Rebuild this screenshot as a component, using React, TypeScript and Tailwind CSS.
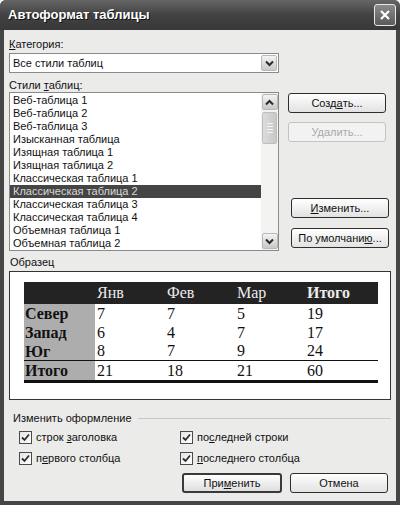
import type { ReactNode } from "react";

const ui = { fontFamily: '"Liberation Sans", Arial, sans-serif' };
const serif = { fontFamily: '"Liberation Serif", "Times New Roman", serif' };

const styles = [
  "Веб-таблица 1",
  "Веб-таблица 2",
  "Веб-таблица 3",
  "Изысканная таблица",
  "Изящная таблица 1",
  "Изящная таблица 2",
  "Классическая таблица 1",
  "Классическая таблица 2",
  "Классическая таблица 3",
  "Классическая таблица 4",
  "Объемная таблица 1",
  "Объемная таблица 2",
];

const rows = [
  { name: "Север", v: ["7", "7", "5", "19"] },
  { name: "Запад", v: ["6", "4", "7", "17"] },
  { name: "Юг", v: ["8", "7", "9", "24"] },
];

function Chevron({ up = false }: { up?: boolean }) {
  return (
    <svg width="9" height="7" viewBox="0 0 9 7">
      <path
        d={up ? "M1 5.5 L4.5 2 L8 5.5" : "M1 1.5 L4.5 5 L8 1.5"}
        fill="none"
        stroke="#2a2a2a"
        strokeWidth="2"
      />
    </svg>
  );
}

function ArrowBox({ up = false }: { up?: boolean }) {
  return (
    <div className="w-[16px] h-[16px] rounded-[2px] border border-[#b8b8b8] bg-gradient-to-b from-[#f4f4f4] to-[#c8c8c8] flex items-center justify-center">
      <Chevron up={up} />
    </div>
  );
}

function Btn({
  children,
  disabled = false,
  def = false,
  className = "",
}: {
  children: ReactNode;
  disabled?: boolean;
  def?: boolean;
  className?: string;
}) {
  return (
    <div
      className={`h-[20px] w-[98px] rounded-[3px] flex items-center justify-center text-[11px] ${
        disabled
          ? "border border-[#c4c4c4] text-[#a8a8a8] bg-[#f2f2f2]"
          : def
          ? "border-2 border-[#3a3a3a] text-[#111] bg-gradient-to-b from-white to-[#dedede]"
          : "border border-[#2e2e2e] text-[#111] bg-gradient-to-b from-white to-[#e2e2e2]"
      } ${className}`}
    >
      {children}
    </div>
  );
}

function Check({ children }: { children: ReactNode }) {
  return (
    <div className="flex items-center gap-[4px] h-[14px]">
      <div className="w-[13px] h-[13px] border border-[#4a4a4a] bg-gradient-to-br from-[#e4e4e4] to-white flex items-center justify-center">
        <svg width="9" height="9" viewBox="0 0 9 9">
          <path d="M1 4.5 L3.5 7 L8 1.5" fill="none" stroke="#2c2c2c" strokeWidth="1.8" />
        </svg>
      </div>
      <span className="text-[11px] text-[#111]">{children}</span>
    </div>
  );
}

export default function App() {
  return (
    <div className="w-[400px] h-[505px] bg-[#464646] flex flex-col rounded-t-[6px]" style={ui}>
      {/* title bar */}
      <div className="h-[30px] shrink-0 flex items-center justify-between pl-[8px] pr-[4px] rounded-t-[6px] bg-gradient-to-b from-[#666] via-[#424242] to-[#383838]">
        <span className="text-white font-bold text-[13px] [text-shadow:1px_1px_0_#111]">
          Автоформат таблицы
        </span>
        <div className="w-[22px] h-[22px] rounded-[3px] border border-[#e8e8e8] bg-gradient-to-b from-[#8a8a8a] to-[#5a5a5a] flex items-center justify-center">
          <svg width="12" height="12" viewBox="0 0 12 12">
            <path d="M2 2 L10 10 M10 2 L2 10" stroke="white" strokeWidth="2.2" />
          </svg>
        </div>
      </div>

      {/* body */}
      <div className="flex-1 mx-[4px] mb-[4px] bg-[#ebebea] px-[5px] pt-[8px] text-[11px] text-[#111]">
        <div className="h-[13px] leading-[13px]">
          <span className="underline">К</span>атегория:
        </div>
        <div className="mt-[2px] w-[270px] h-[20px] bg-white border border-[#8a8a8a] flex items-center justify-between pl-[3px] pr-[1px]">
          <span>Все стили таблиц</span>
          <ArrowBox />
        </div>
        <div className="mt-[6px] h-[13px] leading-[13px]">
          Стили <span className="underline">т</span>аблиц:
        </div>

        <div className="flex">
          <div className="w-[270px] h-[159px] bg-white border border-[#8a8a8a] flex">
            <div className="flex-1 pt-[1px]">
              {styles.map((s, i) => (
                <div
                  key={s}
                  className={`h-[13px] leading-[13px] pl-[3px] ${
                    i === 7 ? "bg-[#454545] text-[#d8d8d8]" : ""
                  }`}
                >
                  {s}
                </div>
              ))}
            </div>
            <div className="w-[17px] bg-[#f3f3f1] flex flex-col items-center justify-between py-[1px]">
              <div className="flex flex-col items-center">
                <ArrowBox up />
                <div className="mt-[2px] w-[15px] h-[32px] rounded-[2px] border border-[#bdbdbd] bg-gradient-to-r from-[#dcdcdc] to-[#c8c8c8] flex flex-col items-center justify-center gap-[2px]">
                  <div className="w-[6px] h-px bg-[#f4f4f4]" />
                  <div className="w-[6px] h-px bg-[#f4f4f4]" />
                  <div className="w-[6px] h-px bg-[#f4f4f4]" />
                  <div className="w-[6px] h-px bg-[#f4f4f4]" />
                </div>
              </div>
              <ArrowBox />
            </div>
          </div>
          <div className="ml-[9px] flex flex-col">
            <Btn className="mt-[1px]">
              Созд<span className="underline">а</span>ть...
            </Btn>
            <Btn disabled className="mt-[9px]">
              Удалить...
            </Btn>
            <Btn className="mt-[56px] ml-[3px]">
              <span className="underline">И</span>зменить...
            </Btn>
            <Btn className="mt-[10px] ml-[3px]">
              По умолчани<span className="underline">ю</span>...
            </Btn>
          </div>
        </div>

        <div className="mt-[5px] h-[13px] leading-[13px] pl-[1px]">Образец</div>
        <div className="mt-[2px] w-[382px] h-[129px] bg-white border border-[#333] pt-[10px] pl-[14px]">
          <div className="w-[354px]" style={serif}>
            <div className="h-[22px] bg-[#232323] text-[#ececec] text-[16px] flex items-center">
              <div className="w-[71px]" />
              <div className="w-[70px] pl-[2px]">Янв</div>
              <div className="w-[70px] pl-[2px]">Фев</div>
              <div className="w-[70px] pl-[2px]">Мар</div>
              <div className="flex-1 pl-[2px] font-bold">Итого</div>
            </div>
            {rows.map((r, i) => (
              <div
                key={r.name}
                className={`h-[19px] flex items-center text-[16px] text-[#111] ${
                  i === 2 ? "border-b border-[#111]" : ""
                }`}
              >
                <div className="w-[71px] h-full bg-[#adadad] font-bold pl-[1px] leading-[19px]">{r.name}</div>
                {r.v.map((v, j) => (
                  <div key={j} className={`${j === 3 ? "flex-1" : "w-[70px]"} pl-[2px]`}>
                    {v}
                  </div>
                ))}
              </div>
            ))}
            <div className="h-[22px] flex items-center text-[16px] text-[#111] border-b-[3px] border-[#111]">
              <div className="w-[71px] h-full bg-[#adadad] font-bold pl-[1px] leading-[19px]">Итого</div>
              {["21", "18", "21", "60"].map((v, j) => (
                <div key={j} className={`${j === 3 ? "flex-1" : "w-[70px]"} pl-[2px]`}>
                  {v}
                </div>
              ))}
            </div>
          </div>
        </div>

        <div className="mt-[12px] h-[13px] flex items-center pl-[4px]">
          <span className="leading-[13px]">Изменить оформление</span>
          <div className="flex-1 ml-[6px] h-px bg-[#c8c8c8]" />
        </div>
        <div className="mt-[5px] pl-[10px] grid grid-cols-[161px_1fr] gap-y-[7px]">
          <Check>
            строк <span className="underline">з</span>аголовка
          </Check>
          <Check>
            по<span className="underline">с</span>ледней строки
          </Check>
          <Check>
            п<span className="underline">е</span>рвого столбца
          </Check>
          <Check>
            <span className="underline">п</span>оследнего столбца
          </Check>
        </div>
        <div className="mt-[8px] flex justify-end gap-[8px] pr-[3px]">
          <Btn def className="w-[100px]">
            При<span className="underline">м</span>енить
          </Btn>
          <Btn className="w-[98px]">Отмена</Btn>
        </div>
      </div>
    </div>
  );
}
